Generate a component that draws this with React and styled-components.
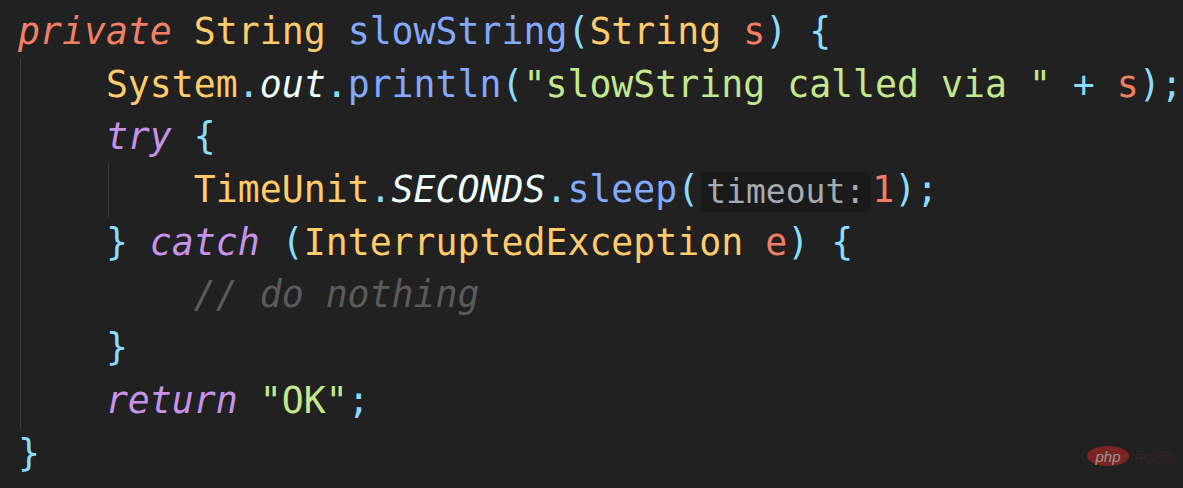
import React from 'react';
import styled, { createGlobalStyle } from 'styled-components';

const colors = {
    modifier: '#f27f66',
    type: '#ffcb6b',
    fn: '#82aaff',
    punc: '#89ddff',
    field: '#eeffff',
    str: '#c3e88d',
    param: '#f27f66',
    ctrl: '#c792ea',
    comment: '#5b5b5b',
};

const italicKinds = ['modifier', 'field', 'ctrl', 'comment'];

const GlobalStyle = createGlobalStyle`
    html, body {
        margin: 0;
        padding: 0;
        background: #212121;
    }
`;

const lines = [
    {
        guides: [],
        tokens: [
            ['modifier', 'private'], [null, ' '], ['type', 'String'], [null, ' '], ['fn', 'slowString'],
            ['punc', '('], ['type', 'String'], [null, ' '], ['param', 's'], ['punc', ')'], [null, ' '], ['punc', '{'],
        ],
    },
    {
        guides: [true],
        tokens: [
            ['type', 'System'], ['punc', '.'], ['field', 'out'], ['punc', '.'], ['fn', 'println'], ['punc', '('],
            ['str', '"slowString called via "'], [null, ' '], ['punc', '+'], [null, ' '], ['param', 's'],
            ['punc', ')'], ['punc', ';'],
        ],
    },
    {
        guides: [true],
        tokens: [['ctrl', 'try'], [null, ' '], ['punc', '{']],
    },
    {
        guides: [true, true],
        tokens: [
            ['type', 'TimeUnit'], ['punc', '.'], ['field', 'SECONDS'], ['punc', '.'], ['fn', 'sleep'], ['punc', '('],
            ['hint', 'timeout:'], ['param', '1'], ['punc', ')'], ['punc', ';'],
        ],
    },
    {
        guides: [true],
        tokens: [
            ['punc', '}'], [null, ' '], ['ctrl', 'catch'], [null, ' '], ['punc', '('], ['type', 'InterruptedException'],
            [null, ' '], ['param', 'e'], ['punc', ')'], [null, ' '], ['punc', '{'],
        ],
    },
    {
        guides: [true, false],
        tokens: [['comment', '// do nothing']],
    },
    {
        guides: [true],
        tokens: [['punc', '}']],
    },
    {
        guides: [true],
        tokens: [['ctrl', 'return'], [null, ' '], ['str', '"OK"'], ['punc', ';']],
    },
    {
        guides: [],
        tokens: [['punc', '}']],
    },
];

export default () => {
    return (
        <Editor>
            <GlobalStyle />
            {lines.map((line, i) => (
                <Line key={i}>
                    {line.guides.map((g, j) => <Indent key={j} $guide={g} />)}
                    {line.tokens.map(([kind, text], j) => {
                        if (kind === 'hint') return <Hint key={j}>{text}</Hint>;
                        return (
                            <Token key={j} $color={colors[kind]} $italic={italicKinds.includes(kind)}>
                                {text}
                            </Token>
                        );
                    })}
                </Line>
            ))}
            <Watermark>
                <PhpBadge>php</PhpBadge>
                <SiteName>中文网</SiteName>
            </Watermark>
        </Editor>
    );
};

const Editor = styled.div`
    position: relative;
    width: 1183px;
    height: 488px;
    overflow: hidden;
    box-sizing: border-box;
    padding: 6px 0 0 18px;
    background: #212121;
    font-family: "DejaVu Sans Mono", "Liberation Mono", monospace;
    font-size: 36.5px;
    color: #eeffff;
`;

const Line = styled.div`
    height: 52.7px;
    line-height: 52.7px;
    white-space: pre;
`;

const Indent = styled.span`
    display: inline-block;
    width: 4ch;
    height: 52.7px;
    vertical-align: top;
    background: ${p => p.$guide
        ? 'linear-gradient(to right, transparent 2px, #3d3d3d 2px, #3d3d3d 3px, transparent 3px)'
        : 'none'};
`;

const Token = styled.span`
    color: ${p => p.$color || '#eeffff'};
    font-style: ${p => p.$italic ? 'italic' : 'normal'};
`;

const Hint = styled.span`
    display: inline-block;
    margin: 0 2px;
    padding: 0 5px;
    font-size: 33px;
    line-height: 40px;
    vertical-align: -1px;
    color: #a5acb1;
    background: #1a1a1a;
    border-radius: 5px;
`;

const Watermark = styled.div`
    position: absolute;
    right: 10px;
    bottom: 22px;
    display: flex;
    align-items: center;
    gap: 5px;
    opacity: 0.7;
`;

const PhpBadge = styled.div`
    width: 42px;
    height: 20px;
    border-radius: 50%;
    background: #a32424;
    display: flex;
    justify-content: center;
    align-items: center;
    font-family: "Liberation Sans", sans-serif;
    font-style: italic;
    font-size: 15px;
    line-height: 1;
    color: #d0c8c8;
`;

const SiteName = styled.div`
    font-family: "Noto Sans CJK SC", sans-serif;
    font-size: 13px;
    line-height: 1;
    color: #3e2626;
`;
